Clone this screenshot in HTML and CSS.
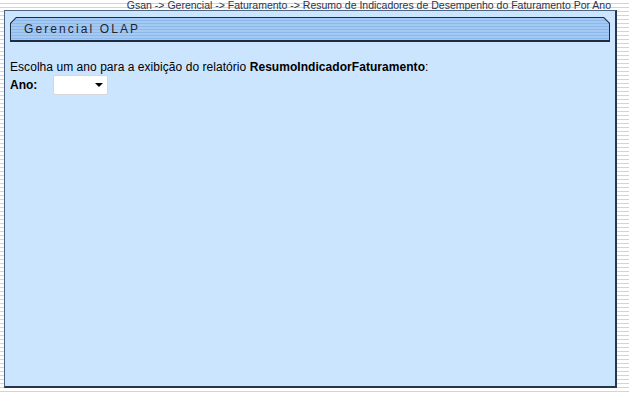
FILE: index.html
```html
<!DOCTYPE html>
<html lang="pt-BR">
<head>
    <meta charset="UTF-8">
    <title>Resumo de Indicadores de Desempenho do Faturamento Por Ano</title>
    <link rel="stylesheet" href="styles.css">
</head>
<body>
    <!-- Breadcrumb -->
    <div class="breadcrumb">Gsan -&gt; Gerencial -&gt; Faturamento -&gt; Resumo de Indicadores de Desempenho do Faturamento Por Ano</div>

    <!-- Main Box -->
    <div class="main-box">
        <div class="title-bar">
            <div class="title-inner">Gerencial OLAP</div>
        </div>

        <form class="report-form">
            <p class="intro">Escolha um ano para a exibição do relatório <b>ResumoIndicadorFaturamento</b>:</p>
            <div class="field-row">
                <label class="field-label" for="ano">Ano:</label>
                <div class="select-wrap">
                    <select id="ano" name="ano" class="year-select">
                        <option value=""></option>
                    </select>
                </div>
            </div>
        </form>
    </div>
</body>
</html>
```

FILE: styles.css
```css
body {
    margin: 0;
    padding: 0;
    font-family: "Liberation Sans", Arial, sans-serif;
    background-color: #ffffff;
    background-image: repeating-linear-gradient(to bottom, #ffffff 0, #ffffff 3px, #b8dcf2 3px, #b8dcf2 4px);
    width: 629px;
    height: 393px;
    overflow: hidden;
}
.breadcrumb {
    height: 10px;
    line-height: 10px;
    font-size: 10.5px;
    color: #2a3550;
    text-align: right;
    padding-right: 18px;
    white-space: nowrap;
}
.main-box {
    margin-left: 4px;
    width: 600px;
    height: 369px;
    background-color: #cce5ff;
    border-top: 1px solid #4d6582;
    border-left: 1px solid #4d6582;
    border-right: 2px solid #27364f;
    border-bottom: 2px solid #27364f;
    padding: 6px 5px 0 5px;
}
.title-bar {
    height: 25px;
    background-color: #1e2b40;
    clip-path: polygon(6px 0, calc(100% - 6px) 0, 100% 6px, 100% 100%, 0 100%, 0 6px);
    box-sizing: border-box;
    padding: 1px 1px 2px 1px;
}
.title-inner {
    height: 100%;
    background-image: repeating-linear-gradient(to bottom, #a4c9f2 0, #a4c9f2 2px, #8cb8ec 2px, #8cb8ec 3px);
    clip-path: polygon(5.5px 0, calc(100% - 5.5px) 0, 100% 5.5px, 100% 100%, 0 100%, 0 5.5px);
    font-size: 12px;
    letter-spacing: 2.1px;
    color: #1f2430;
    line-height: 22px;
    padding-left: 13px;
}
.report-form {
    margin: 0;
    padding-top: 18px;
}
.intro {
    margin: 0;
    font-size: 12px;
    line-height: 14px;
    letter-spacing: 0.05px;
    color: #000000;
}
.field-row {
    display: flex;
    align-items: center;
    margin-top: 1px;
}
.field-label {
    font-size: 12px;
    font-weight: bold;
    width: 43px;
}
.select-wrap {
    position: relative;
    width: 55px;
    height: 20px;
}
.select-wrap::after {
    content: "";
    position: absolute;
    top: 8px;
    left: 42px;
    border-left: 4px solid transparent;
    border-right: 4px solid transparent;
    border-top: 4px solid #000000;
    pointer-events: none;
}
.year-select {
    appearance: none;
    -webkit-appearance: none;
    width: 55px;
    height: 20px;
    margin: 0;
    border: 1px solid #d4d8dc;
    border-radius: 2px;
    background-color: #ffffff;
    font-family: "Liberation Sans", Arial, sans-serif;
    font-size: 12px;
}
```
